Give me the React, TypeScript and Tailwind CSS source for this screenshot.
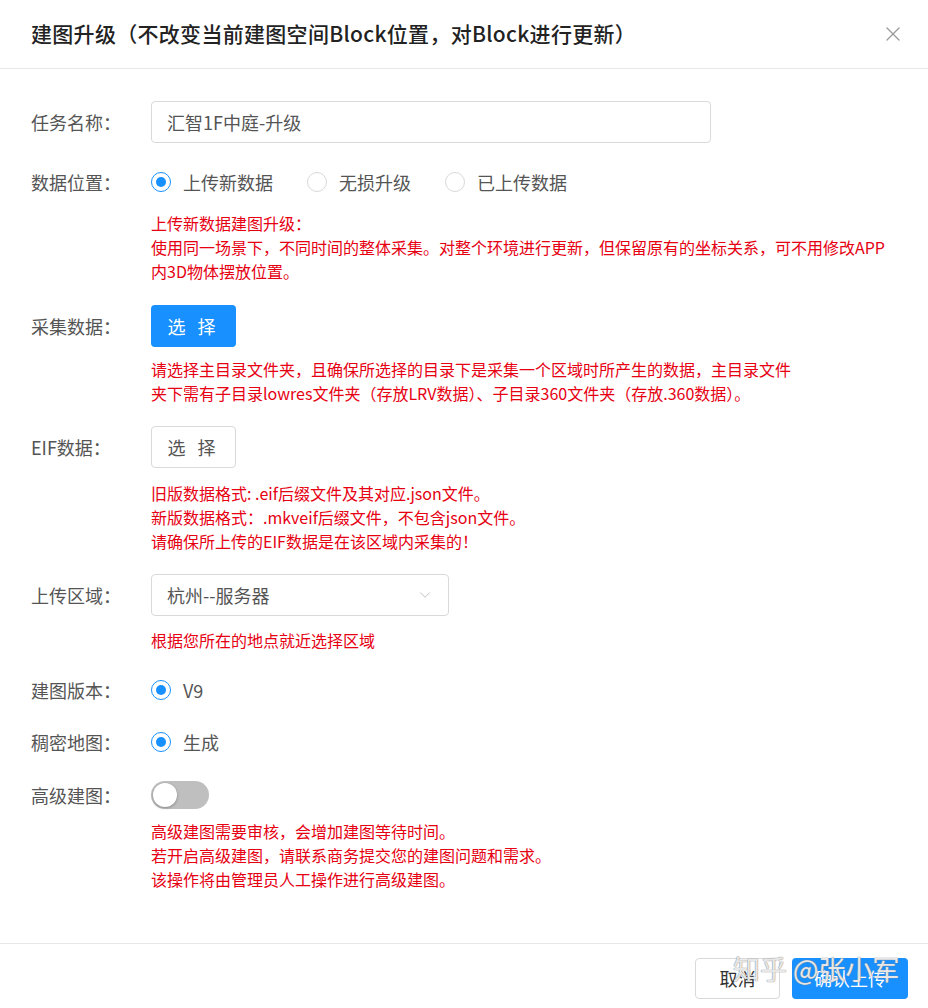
import { X, ChevronDown } from 'lucide-react'

const font = { fontFamily: '"Noto Sans CJK SC", "Noto Sans", sans-serif' }

function Label({ children }: { children: string }) {
  return <div className="w-[120px] shrink-0 text-[18px] text-[#555]">{children}</div>
}

function Radio({ label, checked }: { label: string; checked?: boolean }) {
  return (
    <div className="flex items-center mr-[34px]">
      <span
        className={`w-[20px] h-[20px] rounded-full border flex items-center justify-center ${
          checked ? 'border-[#1890ff]' : 'border-[#d9d9d9]'
        }`}
      >
        {checked && <span className="w-[10px] h-[10px] rounded-full bg-[#1890ff]" />}
      </span>
      <span className="ml-[12px] text-[18px] text-[#555]">{label}</span>
    </div>
  )
}

function Help({ lines, className = '' }: { lines: string[]; className?: string }) {
  return (
    <div className={`pl-[120px] text-[16px] leading-[24px] text-[#e60012] ${className}`}>
      {lines.map((l) => (
        <div key={l} className="whitespace-nowrap">
          {l}
        </div>
      ))}
    </div>
  )
}

export default function App() {
  return (
    <div className="w-[928px] h-[1008px] bg-white flex flex-col" style={font}>
      {/* Header */}
      <div className="h-[69px] flex items-center justify-between pl-[31px] pr-[23px] border-b border-[#e8e8e8] shrink-0">
        <h1 className="text-[21px] font-medium text-[#222] tracking-[0.3px]">
          建图升级（不改变当前建图空间Block位置，对Block进行更新）
        </h1>
        <X size={24} strokeWidth={1.3} className="text-[#999]" />
      </div>

      {/* Body */}
      <div className="flex-1 pl-[31px]">
        <div className="flex items-center mt-[32px]">
          <Label>任务名称：</Label>
          <div className="w-[560px] h-[42px] border border-[#d9d9d9] rounded-[4px] flex items-center px-[15px] text-[18px] text-[#555]">
            汇智1F中庭-升级
          </div>
        </div>

        <div className="flex items-center mt-[27px] h-[24px]">
          <Label>数据位置：</Label>
          <Radio label="上传新数据" checked />
          <Radio label="无损升级" />
          <Radio label="已上传数据" />
        </div>

        <Help
          className="mt-[17px]"
          lines={[
            '上传新数据建图升级：',
            '使用同一场景下，不同时间的整体采集。对整个环境进行更新，但保留原有的坐标关系，可不用修改APP',
            '内3D物体摆放位置。',
          ]}
        />

        <div className="flex items-center mt-[22px]">
          <Label>采集数据：</Label>
          <button className="w-[85px] h-[42px] rounded-[4px] bg-[#1890ff] text-white text-[18px] tracking-[4px]">
            选 择
          </button>
        </div>

        <Help
          className="mt-[10px]"
          lines={[
            '请选择主目录文件夹，且确保所选择的目录下是采集一个区域时所产生的数据，主目录文件',
            '夹下需有子目录lowres文件夹（存放LRV数据）、子目录360文件夹（存放.360数据）。',
          ]}
        />

        <div className="flex items-center mt-[21px]">
          <Label>EIF数据：</Label>
          <button className="w-[85px] h-[42px] rounded-[4px] border border-[#d9d9d9] bg-white text-[#555] text-[18px] tracking-[4px]">
            选 择
          </button>
        </div>

        <Help
          className="mt-[13px]"
          lines={[
            '旧版数据格式: .eif后缀文件及其对应.json文件。',
            '新版数据格式：.mkveif后缀文件，不包含json文件。',
            '请确保所上传的EIF数据是在该区域内采集的！',
          ]}
        />

        <div className="flex items-center mt-[21px]">
          <Label>上传区域：</Label>
          <div className="w-[298px] h-[42px] border border-[#d9d9d9] rounded-[4px] flex items-center justify-between pl-[15px] pr-[14px] text-[18px] text-[#555]">
            <span>杭州--服务器</span>
            <ChevronDown size={18} strokeWidth={1.2} className="text-[#bbb]" />
          </div>
        </div>

        <Help className="mt-[12px]" lines={['根据您所在的地点就近选择区域']} />

        <div className="flex items-center mt-[26px] h-[24px]">
          <Label>建图版本：</Label>
          <Radio label="V9" checked />
        </div>

        <div className="flex items-center mt-[28px] h-[24px]">
          <Label>稠密地图：</Label>
          <Radio label="生成" checked />
        </div>

        <div className="flex items-center mt-[27px]">
          <Label>高级建图：</Label>
          <div className="w-[58px] h-[28px] rounded-full bg-[#bfbfbf] flex items-center px-[2px]">
            <span className="w-[24px] h-[24px] rounded-full bg-white shadow-[0_1px_3px_rgba(0,0,0,0.3)]" />
          </div>
        </div>

        <Help
          className="mt-[10px]"
          lines={[
            '高级建图需要审核，会增加建图等待时间。',
            '若开启高级建图，请联系商务提交您的建图问题和需求。',
            '该操作将由管理员人工操作进行高级建图。',
          ]}
        />
      </div>

      {/* Footer */}
      <div className="relative h-[65px] border-t border-[#e8e8e8] flex items-start justify-end gap-[12px] pr-[20px] pt-[14px] shrink-0">
        <button className="w-[85px] h-[41px] rounded-[4px] border border-[#d9d9d9] bg-white text-[#333] text-[18px]">
          取消
        </button>
        <button className="w-[116px] h-[41px] rounded-[4px] bg-[#1890ff] text-white text-[18px]">
          确认上传
        </button>
        <div className="absolute left-[733px] top-[5px] text-[27px] text-white/80 whitespace-nowrap [text-shadow:0_0_1px_#888,0_0_1px_#888]">
          知乎 @张小军
        </div>
      </div>
    </div>
  )
}
